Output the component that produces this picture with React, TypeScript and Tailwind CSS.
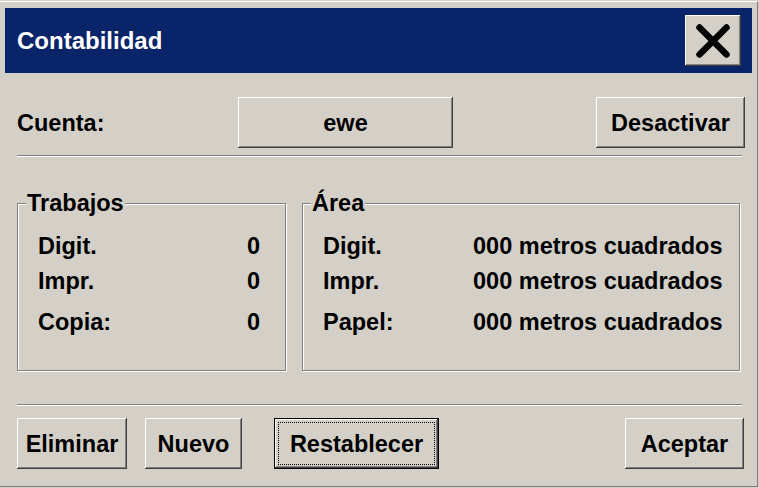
const bevel =
  "shadow-[inset_-1px_-1px_#404040,inset_1px_1px_#ffffff,inset_-2px_-2px_#808080,inset_2px_2px_#d4d0c8]";
const etched =
  "border border-[#808080] shadow-[inset_1px_1px_#ffffff,1px_1px_#ffffff]";

const CloseIcon = () => (
  <svg width="36" height="36" viewBox="0 0 36 36">
    <path
      d="M4.5 4.5 L31.5 31.5 M31.5 4.5 L4.5 31.5"
      stroke="#000"
      strokeWidth="6.5"
      strokeLinecap="round"
      fill="none"
    />
  </svg>
);

const Button = ({ label, width }: { label: string; width: string }) => (
  <button className={`${width} h-[51px] bg-[#d4d0c8] ${bevel} flex items-center justify-center`}>
    {label}
  </button>
);

const GroupBox = ({
  title,
  width,
  children,
}: {
  title: string;
  width: string;
  children: React.ReactNode;
}) => (
  <div className={`relative ${width} h-[168px] ${etched}`}>
    <span className="absolute left-[8px] top-[-15px] bg-[#d4d0c8] px-px">{title}</span>
    {children}
  </div>
);

export default function App() {
  return (
    <div className="w-[759px] h-[488px] bg-[#d4d0c8] font-['Liberation_Sans',Arial,sans-serif] font-bold text-[23.5px] leading-[28px] text-black overflow-hidden">
      <div className="mt-px w-[758px] h-[486px] border-t border-t-white border-r border-r-[#808080] border-b border-b-[#808080] flex flex-col">
        {/* Title bar */}
        <div className="mt-[6px] mx-[5px] h-[65px] bg-[#0a246a] flex items-center justify-between pl-[12px] pr-[11px]">
          <span className="text-white text-[24px]">Contabilidad</span>
          <button className={`w-[56px] h-[51px] bg-[#d4d0c8] ${bevel} flex items-center justify-center`}>
            <CloseIcon />
          </button>
        </div>

        <div className="pl-[17px] flex flex-col">
          {/* Account row */}
          <div className="mt-[24px] w-[728px] h-[51px] flex items-center">
            <span className="w-[221px]">Cuenta:</span>
            <Button label="ewe" width="w-[215px]" />
            <div className="ml-auto">
              <Button label="Desactivar" width="w-[149px]" />
            </div>
          </div>

          <div className="mt-[7px] w-[725px] h-[2px] border-t border-t-[#808080] border-b border-b-white" />

          {/* Groups */}
          <div className="mt-[46px] flex gap-[16px]">
            <GroupBox title="Trabajos" width="w-[269px]">
              <div className="flex flex-col pl-[20px] pr-[25px]">
                <div className="mt-[28px] flex justify-between">
                  <span>Digit.</span>
                  <span>0</span>
                </div>
                <div className="mt-[7px] flex justify-between">
                  <span>Impr.</span>
                  <span>0</span>
                </div>
                <div className="mt-[13px] flex justify-between">
                  <span>Copia:</span>
                  <span>0</span>
                </div>
              </div>
            </GroupBox>
            <GroupBox title="Área" width="w-[438px]">
              <div className="flex flex-col pl-[20px]">
                <div className="mt-[28px] flex">
                  <span className="w-[150px]">Digit.</span>
                  <span>000 metros cuadrados</span>
                </div>
                <div className="mt-[7px] flex">
                  <span className="w-[150px]">Impr.</span>
                  <span>000 metros cuadrados</span>
                </div>
                <div className="mt-[13px] flex">
                  <span className="w-[150px]">Papel:</span>
                  <span>000 metros cuadrados</span>
                </div>
              </div>
            </GroupBox>
          </div>

          <div className="mt-[33px] w-[725px] h-[2px] border-t border-t-[#808080] border-b border-b-white" />

          {/* Bottom buttons */}
          <div className="mt-[12px] w-[727px] h-[51px] flex">
            <Button label="Eliminar" width="w-[110px]" />
            <div className="ml-[18px]">
              <Button label="Nuevo" width="w-[97px]" />
            </div>
            <button className="relative ml-[32px] w-[165px] h-[51px] bg-[#d4d0c8] border border-black shadow-[inset_-1px_-1px_#404040,inset_1px_1px_#ffffff,inset_-2px_-2px_#808080,inset_2px_2px_#d4d0c8] flex items-center justify-center">
              <span className="absolute inset-[3px] border border-dotted border-black" />
              Restablecer
            </button>
            <div className="ml-auto">
              <Button label="Aceptar" width="w-[119px]" />
            </div>
          </div>
        </div>
      </div>
    </div>
  );
}
